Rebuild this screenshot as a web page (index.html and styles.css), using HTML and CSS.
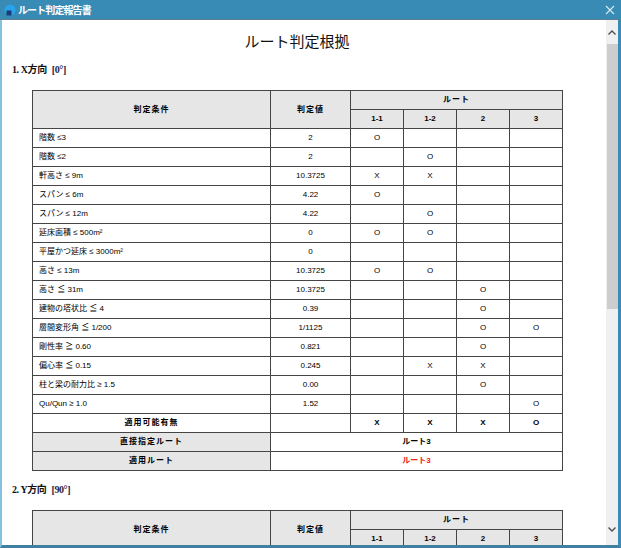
FILE: index.html
```html
<!DOCTYPE html>
<html lang="ja">
<head>
<meta charset="utf-8">
<title>ルート判定報告書</title>
<link rel="stylesheet" href="styles.css">
</head>
<body>
<div class="window">
  <div class="titlebar">
    <svg class="app-icon" width="14" height="14" viewBox="0 0 14 14">
      <circle cx="8" cy="7" r="5.5" fill="#2aa3ea"/>
      <rect x="4.5" y="7.5" width="5" height="5" fill="#1b3c74"/>
    </svg>
    <span class="title">ルート判定報告書</span>
    <span class="spacer"></span>
    <svg class="close" width="10" height="10" viewBox="0 0 10 10">
      <path d="M1 1 L9 9 M9 1 L1 9" stroke="#d6ebf5" stroke-width="1.1" fill="none"/>
    </svg>
  </div>
  <div class="frame">
    <div class="content">
      <div class="page">
        <h1 class="doc-title">ルート判定根拠</h1>

        <section class="section first">
          <h2 class="sec-title">1. X方向<span class="angle">[0°]</span></h2>
          <table class="judge">
            <colgroup>
              <col class="w-cond"><col class="w-val"><col class="w-r"><col class="w-r"><col class="w-r"><col class="w-r">
            </colgroup>
            <thead>
              <tr><th rowspan="2" class="jp">判定条件</th><th rowspan="2" class="jp">判定値</th><th colspan="4" class="jp">ルート</th></tr>
              <tr><th>1-1</th><th>1-2</th><th>2</th><th>3</th></tr>
            </thead>
            <tbody>
              <tr><td class="cond">階数 ≤3</td><td>2</td><td>O</td><td></td><td></td><td></td></tr>
              <tr><td class="cond">階数 ≤2</td><td>2</td><td></td><td>O</td><td></td><td></td></tr>
              <tr><td class="cond">軒高さ ≤ 9m</td><td>10.3725</td><td>X</td><td>X</td><td></td><td></td></tr>
              <tr><td class="cond">スパン ≤ 6m</td><td>4.22</td><td>O</td><td></td><td></td><td></td></tr>
              <tr><td class="cond">スパン ≤ 12m</td><td>4.22</td><td></td><td>O</td><td></td><td></td></tr>
              <tr><td class="cond">延床面積 ≤ 500m²</td><td>0</td><td>O</td><td>O</td><td></td><td></td></tr>
              <tr><td class="cond">平屋かつ延床 ≤ 3000m²</td><td>0</td><td></td><td></td><td></td><td></td></tr>
              <tr><td class="cond">高さ ≤ 13m</td><td>10.3725</td><td>O</td><td>O</td><td></td><td></td></tr>
              <tr><td class="cond">高さ ≦ 31m</td><td>10.3725</td><td></td><td></td><td>O</td><td></td></tr>
              <tr><td class="cond">建物の塔状比 ≦ 4</td><td>0.39</td><td></td><td></td><td>O</td><td></td></tr>
              <tr><td class="cond">層間変形角 ≦ 1/200</td><td>1/1125</td><td></td><td></td><td>O</td><td>O</td></tr>
              <tr><td class="cond">剛性率 ≧ 0.60</td><td>0.821</td><td></td><td></td><td>O</td><td></td></tr>
              <tr><td class="cond">偏心率 ≦ 0.15</td><td>0.245</td><td></td><td>X</td><td>X</td><td></td></tr>
              <tr><td class="cond">柱と梁の耐力比 ≥ 1.5</td><td>0.00</td><td></td><td></td><td>O</td><td></td></tr>
              <tr><td class="cond">Qu/Qun ≥ 1.0</td><td>1.52</td><td></td><td></td><td></td><td>O</td></tr>
              <tr class="bold"><td class="label">適用可能有無</td><td></td><td>X</td><td>X</td><td>X</td><td>O</td></tr>
              <tr class="bold"><td class="label shaded">直接指定ルート</td><td colspan="5">ルート3</td></tr>
              <tr class="bold"><td class="label shaded">適用ルート</td><td colspan="5" class="red">ルート3</td></tr>
            </tbody>
          </table>
        </section>

        <section class="section">
          <h2 class="sec-title">2. Y方向<span class="angle">[90°]</span></h2>
          <table class="judge">
            <colgroup>
              <col class="w-cond"><col class="w-val"><col class="w-r"><col class="w-r"><col class="w-r"><col class="w-r">
            </colgroup>
            <thead>
              <tr><th rowspan="2" class="jp">判定条件</th><th rowspan="2" class="jp">判定値</th><th colspan="4" class="jp">ルート</th></tr>
              <tr><th>1-1</th><th>1-2</th><th>2</th><th>3</th></tr>
            </thead>
          </table>
        </section>
      </div>
    </div>
    <div class="scrollbar">
      <svg class="arrow" width="12" height="12" viewBox="0 0 12 12">
        <path d="M2.5 7.5 L6 4 L9.5 7.5" stroke="#505050" stroke-width="1.4" fill="none"/>
      </svg>
      <div class="track">
        <div class="thumb"></div>
      </div>
      <svg class="arrow" width="12" height="12" viewBox="0 0 12 12">
        <path d="M2.5 4.5 L6 8 L9.5 4.5" stroke="#505050" stroke-width="1.4" fill="none"/>
      </svg>
    </div>
  </div>
</div>
</body>
</html>
```

FILE: styles.css
```css
html, body {
  margin: 0;
  padding: 0;
  width: 621px;
  height: 548px;
  overflow: hidden;
  background: #ffffff;
}

.window {
  width: 621px;
  height: 548px;
  display: flex;
  flex-direction: column;
  background: #3a8cb5;
  font-family: "Liberation Sans", "Noto Sans CJK JP", sans-serif;
}

.titlebar {
  height: 20px;
  flex: none;
  display: flex;
  align-items: center;
  background: #388bb4;
  border-bottom: 1px solid #5f7f90;
  box-sizing: border-box;
  padding: 0 6px 0 2px;
}

.app-icon {
  flex: none;
  margin-top: 1px;
}

.title {
  color: #ffffff;
  font-family: "Noto Sans CJK JP", sans-serif;
  font-weight: bold;
  font-size: 10px;
  letter-spacing: -0.9px;
  margin-left: 2px;
  line-height: 20px;
}

.spacer {
  flex: 1;
}

.close {
  flex: none;
}

.frame {
  flex: 1;
  display: flex;
  min-height: 0;
  border-left: 2px solid #86c2df;
  border-right: 3px solid #3a8cb5;
  border-bottom: 3px solid #3f7fa0;
  background: #ffffff;
}

.content {
  flex: 1;
  overflow: hidden;
  background: #ffffff;
}

.page {
  width: 590px;
}

.doc-title {
  margin: 8px 0 0 0;
  height: 26px;
  line-height: 26px;
  text-align: center;
  font-family: "Noto Sans CJK JP", sans-serif;
  font-weight: normal;
  font-size: 15px;
  color: #111111;
}

.section {
  margin-top: 11px;
}

.section.first {
  margin-top: 8px;
}

.sec-title {
  margin: 0 0 12px 0;
  padding-left: 10px;
  height: 16px;
  line-height: 16px;
  font-family: "Liberation Serif", "Noto Sans CJK JP", serif;
  font-weight: bold;
  font-size: 10px;
  letter-spacing: -0.4px;
  color: #111111;
}

.angle {
  margin-left: 5px;
  color: #1c2440;
}

.judge {
  margin-left: 30px;
  width: 530px;
  table-layout: fixed;
  border-collapse: collapse;
  font-size: 8px;
  color: #000000;
}

.w-cond { width: 238px; }
.w-val { width: 80px; }
.w-r { width: 53px; }

.judge th,
.judge td {
  border: 1px solid #454545;
  height: 18px;
  padding: 0;
  text-align: center;
  vertical-align: middle;
  line-height: 10px;
}

.judge th {
  background: #e6e6e6;
  font-weight: bold;
}

.judge th.jp {
  letter-spacing: 1px;
}

.judge td.cond {
  text-align: left;
  padding-left: 6px;
}

.judge tr.bold td {
  font-weight: bold;
}

.judge td.label {
  letter-spacing: 1px;
}

.judge td.shaded {
  background: #e6e6e6;
}

.judge td.red {
  color: #f02020;
}

.scrollbar {
  width: 12px;
  flex: none;
  display: flex;
  flex-direction: column;
  background: #f0f0f0;
}

.arrow {
  flex: none;
  margin: 7px 0 5px 0;
}

.scrollbar .arrow:last-child {
  margin: 5px 0 10px 0;
}

.track {
  flex: 1;
  position: relative;
}

.thumb {
  margin-left: 1px;
  width: 11px;
  height: 265px;
  background: #cdcdcd;
}
```
